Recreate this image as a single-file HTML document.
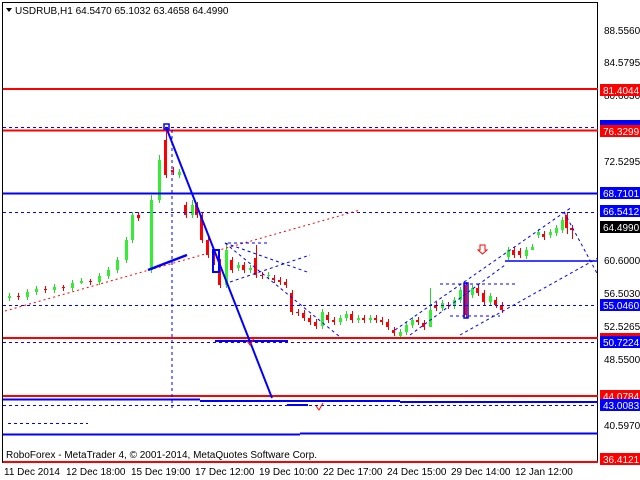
<!DOCTYPE html>
<html><head><meta charset="utf-8"><style>
html,body{margin:0;padding:0;background:#fff;width:640px;height:480px;overflow:hidden}
svg{display:block}
text{font-family:"Liberation Sans",sans-serif;font-size:10px}
</style></head><body>
<svg width="640" height="480" xmlns="http://www.w3.org/2000/svg">
<rect x="0" y="0" width="640" height="480" fill="#fff"/>
<rect x="2.5" y="2.5" width="595" height="460" fill="none" stroke="#000"/>
<!-- wicks -->
<g stroke="#000" stroke-width="1">
<path stroke="#3c3" d="M9.5 293v8M27.5 289v11M36.5 286v9M54.5 284v9M72.5 280v11M81.5 278v6M99.5 273v12M108.5 267v12M117.5 257v16M126.5 237v26M132.5 212v31M151.5 195v78M159.5 155v48M179.5 169v9M192.5 200v18M226.5 245v43M238.5 262v9M250.5 265v8M268.5 272v7M322.5 309v20M340.5 315v10M346.5 311v10M358.5 315v8M370.5 315v8M400.5 329v10M406.5 322v13M412.5 317v11M430.5 288v25M442.5 300v11M454.5 297v12M460.5 287v16M472.5 285v13M490.5 293v12M508.5 247v13M526.5 247v12M532.5 244v6M538.5 229v9M550.5 229v9M556.5 225v11M562.5 217v16"/>
<path stroke="#e00" d="M18.5 293v7M45.5 286v7M63.5 285v6M90.5 279v6M138.5 212v9M166.5 127v51M173.5 167v8M186.5 202v16M197.5 202v16M202.5 212v31M208.5 237v21M214.5 252v13M220.5 259v29M232.5 257v16M244.5 262v11M256.5 245v33M262.5 272v7M274.5 275v8M280.5 277v8M286.5 279v9M292.5 290v25M298.5 309v7M304.5 310v11M310.5 315v10M316.5 319v10M328.5 312v11M334.5 317v8M352.5 311v12M364.5 315v8M376.5 315v8M382.5 317v8M388.5 319v11M394.5 327v9M418.5 317v8M424.5 320v10M436.5 302v9M448.5 302v7M466.5 282v36M478.5 285v11M484.5 290v15M496.5 297v11M502.5 302v11M514.5 247v11M520.5 248v10M544.5 231v9M567.5 212v22M572.5 225v14"/>
</g>
<g fill="#3e3">
<rect x="8" y="296" width="3" height="2"/><rect x="26" y="292" width="3" height="5"/><rect x="35" y="289" width="3" height="3"/><rect x="53" y="287" width="3" height="3"/><rect x="71" y="283" width="3" height="5"/><rect x="80" y="281" width="3" height="2"/><rect x="98" y="276" width="3" height="6"/><rect x="107" y="270" width="3" height="6"/><rect x="116" y="260" width="3" height="10"/><rect x="125" y="240" width="3" height="20"/><rect x="131" y="215" width="3" height="25"/><rect x="150" y="200" width="3" height="70"/><rect x="158" y="160" width="3" height="40"/><rect x="178" y="172" width="3" height="3"/><rect x="191" y="205" width="3" height="10"/><rect x="225" y="250" width="3" height="35"/><rect x="237" y="265" width="3" height="3"/><rect x="249" y="268" width="3" height="2"/><rect x="267" y="275" width="3" height="1"/><rect x="321" y="312" width="3" height="14"/><rect x="339" y="318" width="3" height="4"/><rect x="345" y="314" width="3" height="4"/><rect x="357" y="318" width="3" height="2"/><rect x="369" y="318" width="3" height="2"/><rect x="399" y="332" width="3" height="4"/><rect x="405" y="325" width="3" height="7"/><rect x="411" y="320" width="3" height="5"/><rect x="429" y="310" width="3" height="17"/><rect x="441" y="303" width="3" height="5"/><rect x="453" y="300" width="3" height="6"/><rect x="459" y="290" width="3" height="10"/><rect x="471" y="288" width="3" height="7"/><rect x="489" y="296" width="3" height="6"/><rect x="507" y="250" width="3" height="7"/><rect x="525" y="250" width="3" height="6"/><rect x="531" y="247" width="3" height="3"/><rect x="537" y="232" width="3" height="3"/><rect x="549" y="232" width="3" height="3"/><rect x="555" y="228" width="3" height="5"/><rect x="561" y="220" width="3" height="10"/>
</g>
<g fill="#f00">
<rect x="17" y="296" width="3" height="1"/><rect x="44" y="289" width="3" height="1"/><rect x="62" y="287" width="3" height="1"/><rect x="89" y="281" width="3" height="1"/><rect x="137" y="215" width="3" height="3"/><rect x="164" y="140" width="3" height="35"/><rect x="171" y="170" width="3" height="2"/><rect x="184" y="205" width="3" height="10"/><rect x="195" y="205" width="3" height="10"/><rect x="200" y="215" width="3" height="25"/><rect x="206" y="240" width="3" height="15"/><rect x="212" y="255" width="3" height="7"/><rect x="218" y="262" width="3" height="23"/><rect x="230" y="260" width="3" height="10"/><rect x="242" y="265" width="3" height="5"/><rect x="254" y="258" width="3" height="17"/><rect x="260" y="275" width="3" height="1"/><rect x="272" y="278" width="3" height="2"/><rect x="278" y="280" width="3" height="2"/><rect x="284" y="282" width="3" height="3"/><rect x="290" y="293" width="3" height="19"/><rect x="296" y="312" width="3" height="1"/><rect x="302" y="313" width="3" height="5"/><rect x="308" y="318" width="3" height="4"/><rect x="314" y="322" width="3" height="4"/><rect x="326" y="315" width="3" height="5"/><rect x="332" y="320" width="3" height="2"/><rect x="350" y="314" width="3" height="6"/><rect x="362" y="318" width="3" height="2"/><rect x="374" y="318" width="3" height="2"/><rect x="380" y="320" width="3" height="2"/><rect x="386" y="322" width="3" height="5"/><rect x="392" y="330" width="3" height="3"/><rect x="416" y="320" width="3" height="2"/><rect x="422" y="323" width="3" height="4"/><rect x="434" y="305" width="3" height="3"/><rect x="446" y="305" width="3" height="1"/><rect x="464" y="285" width="3" height="30"/><rect x="476" y="288" width="3" height="5"/><rect x="482" y="293" width="3" height="9"/><rect x="494" y="300" width="3" height="5"/><rect x="500" y="305" width="3" height="5"/><rect x="512" y="250" width="3" height="5"/><rect x="518" y="251" width="3" height="4"/><rect x="542" y="234" width="3" height="3"/><rect x="565" y="215" width="3" height="13"/><rect x="570" y="228" width="3" height="2"/>
</g>
<!-- horizontal levels -->
<line x1="3" y1="89" x2="598" y2="89" stroke="#f00" stroke-width="2"/>
<line x1="3" y1="127.5" x2="598" y2="127.5" stroke="#00f" stroke-dasharray="3,3"/>
<line x1="3" y1="130.5" x2="598" y2="130.5" stroke="#f00" stroke-width="2"/>
<line x1="3" y1="193.5" x2="598" y2="193.5" stroke="#00f" stroke-width="2"/>
<line x1="3" y1="212.5" x2="598" y2="212.5" stroke="#00f" stroke-dasharray="3,3"/>
<line x1="505" y1="261" x2="598" y2="261" stroke="#00f" stroke-width="1.5"/>
<line x1="3" y1="305.5" x2="598" y2="305.5" stroke="#00f" stroke-dasharray="3,3"/>
<line x1="3" y1="338" x2="598" y2="338" stroke="#f00" stroke-width="2"/>
<line x1="3" y1="342.5" x2="598" y2="342.5" stroke="#00f" stroke-dasharray="3,3"/>
<line x1="215" y1="341" x2="288" y2="341" stroke="#00f" stroke-width="2"/>
<line x1="3" y1="396" x2="598" y2="396" stroke="#f00" stroke-width="2"/>
<line x1="3" y1="399.5" x2="200" y2="399.5" stroke="#00f" stroke-width="2"/>
<line x1="200" y1="401" x2="400" y2="401" stroke="#00f" stroke-width="2"/>
<line x1="400" y1="402" x2="598" y2="402" stroke="#00f" stroke-width="2"/>
<line x1="3" y1="405.5" x2="598" y2="405.5" stroke="#00f" stroke-dasharray="3,3"/>
<line x1="287" y1="405" x2="308" y2="405" stroke="#00f" stroke-width="2"/>
<line x1="8" y1="423.5" x2="88" y2="423.5" stroke="#00f" stroke-dasharray="3,3"/>
<line x1="3" y1="434.5" x2="300" y2="434.5" stroke="#00f" stroke-width="2"/>
<line x1="300" y1="433.5" x2="598" y2="433.5" stroke="#00f" stroke-width="2"/>
<line x1="3" y1="462" x2="598" y2="462" stroke="#f00" stroke-width="2"/>
<!-- other drawings -->
<line x1="172" y1="130" x2="172" y2="408" stroke="#00f" stroke-dasharray="3,3"/>
<line x1="5" y1="311" x2="360" y2="210" stroke="#f00" stroke-dasharray="2,3"/>
<line x1="148" y1="270" x2="187" y2="255" stroke="#00f" stroke-width="2.5"/>
<line x1="166" y1="127" x2="272" y2="398" stroke="#00f" stroke-width="2"/>
<line x1="225" y1="243" x2="310" y2="273" stroke="#00f" stroke-dasharray="3,3"/>
<line x1="225" y1="243" x2="340" y2="337" stroke="#00f" stroke-dasharray="3,3"/>
<line x1="230" y1="282" x2="310" y2="255" stroke="#00f" stroke-dasharray="3,3"/>
<line x1="228" y1="243" x2="268" y2="243" stroke="#00f" stroke-dasharray="3,3"/>
<line x1="395" y1="330" x2="572" y2="207" stroke="#00f" stroke-dasharray="3,3"/>
<line x1="410" y1="335" x2="505" y2="265" stroke="#00f" stroke-dasharray="3,3"/>
<line x1="460" y1="335" x2="598" y2="258" stroke="#00f" stroke-dasharray="3,3"/>
<line x1="564" y1="212" x2="598" y2="275" stroke="#00f" stroke-dasharray="3,3"/>
<line x1="440" y1="284" x2="515" y2="284" stroke="#00f" stroke-dasharray="3,3"/>
<line x1="450" y1="316" x2="500" y2="316" stroke="#00f" stroke-dasharray="3,3"/>
<rect x="164" y="124" width="5" height="5" fill="none" stroke="#00f" stroke-width="1.5"/>
<rect x="213" y="250" width="6" height="22" fill="none" stroke="#00f" stroke-width="2"/>
<rect x="464" y="283" width="4" height="35" fill="none" stroke="#00f" stroke-width="1.5"/>
<path d="M247 341 l3 4 l4 -7" fill="none" stroke="#f00"/>
<path d="M316 406 l3 4 l4 -7" fill="none" stroke="#f00"/>
<path d="M480 245 h5 v5 h2 l-4.5 4 l-4.5 -4 h2z" fill="#fff" stroke="#f00"/>
<!-- header -->
<path d="M6 8 h6 l-3 4z" fill="#000"/>
<text x="15" y="14">USDRUB,H1  64.5470 65.1032 63.4658 64.4990</text>
<text x="6" y="458">RoboForex - MetaTrader 4, © 2001-2014, MetaQuotes Software Corp.</text>
<!-- axis labels -->
<g>
<text x="604" y="34">88.5560</text>
<text x="604" y="66">84.5795</text>
<text x="604" y="99">80.6030</text>
<text x="604" y="165">72.5295</text>
<text x="604" y="264">60.6000</text>
<text x="604" y="297">56.5030</text>
<text x="604" y="330">52.5265</text>
<text x="604" y="363">48.5500</text>
<text x="604" y="429">40.5970</text>
</g>
<rect x="600" y="84" width="40" height="12" fill="#f00"/><text x="603" y="94" fill="#fff">81.4044</text>
<rect x="600" y="120" width="40" height="6" fill="#00f"/>
<rect x="600" y="125" width="40" height="12" fill="#f00"/><text x="603" y="135" fill="#fff">76.3299</text>
<rect x="600" y="187" width="40" height="12" fill="#00f"/><text x="603" y="197" fill="#fff">68.7101</text>
<rect x="600" y="205" width="40" height="12" fill="#00f"/><text x="603" y="215" fill="#fff">66.5412</text>
<rect x="600" y="221" width="40" height="12" fill="#000"/><text x="603" y="231" fill="#fff">64.4990</text>
<rect x="600" y="299" width="40" height="12" fill="#00f"/><text x="603" y="309" fill="#fff">55.0460</text>
<rect x="600" y="333" width="40" height="4" fill="#f00"/>
<rect x="600" y="336" width="40" height="12" fill="#00f"/><text x="603" y="346" fill="#fff">50.7224</text>
<rect x="600" y="390" width="40" height="12" fill="#f00"/><text x="603" y="400" fill="#fff">44.0784</text>
<rect x="600" y="399" width="40" height="12" fill="#00f"/><text x="603" y="409" fill="#fff">43.0083</text>
<rect x="600" y="453" width="40" height="12" fill="#f00"/><text x="603" y="463" fill="#fff">36.4121</text>
<g>
<text x="4" y="475">11 Dec 2014</text>
<text x="66" y="475">12 Dec 18:00</text>
<text x="131" y="475">15 Dec 19:00</text>
<text x="195" y="475">17 Dec 12:00</text>
<text x="259" y="475">19 Dec 10:00</text>
<text x="323" y="475">22 Dec 17:00</text>
<text x="387" y="475">24 Dec 15:00</text>
<text x="451" y="475">29 Dec 14:00</text>
<text x="515" y="475">12 Jan 12:00</text>
</g>
</svg>
</body></html>
